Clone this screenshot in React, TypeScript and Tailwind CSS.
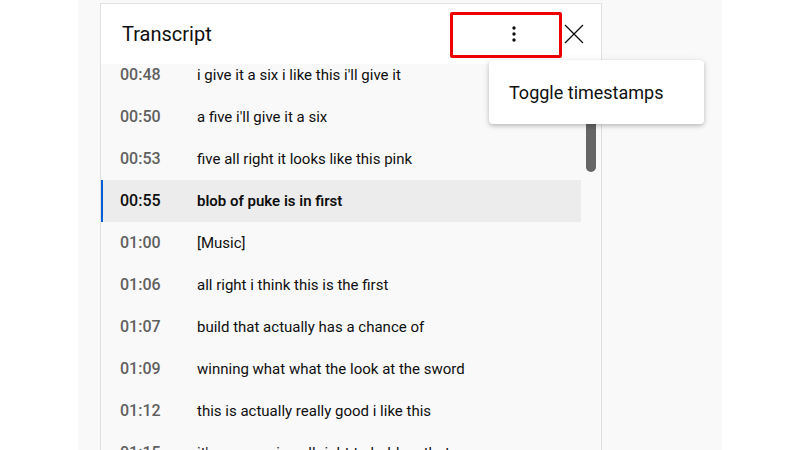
import React from "react";

const rows = [
    { time: "00:48", text: "i give it a six i like this i'll give it" },
    { time: "00:50", text: "a five i'll give it a six" },
    { time: "00:53", text: "five all right it looks like this pink" },
    { time: "00:55", text: "blob of puke is in first", active: true },
    { time: "01:00", text: "[Music]" },
    { time: "01:06", text: "all right i think this is the first" },
    { time: "01:07", text: "build that actually has a chance of" },
    { time: "01:09", text: "winning what what the look at the sword" },
    { time: "01:12", text: "this is actually really good i like this" },
    { time: "01:15", text: "it's an amazing all right to hold on that" },
];

export default function App() {
    return (
        <div className="relative flex h-[450px] w-[800px] overflow-hidden bg-white font-['Roboto',sans-serif]">
            <div className="ml-[78px] h-full w-[644px] bg-[#f9f9f9] pl-[22px] pt-[3px]">
                <div className="flex h-[460px] w-[502px] flex-col border border-[#e0e0e0] bg-[#f9f9f9]">
                    {/* Header */}
                    <div className="relative z-10 flex h-[60px] items-center bg-white pl-[21px] pr-[15px]">
                        <span className="text-[20px] text-[#0f0f0f]">Transcript</span>
                        <div className="flex-1" />
                        <button className="flex h-[24px] w-[24px] items-center justify-center">
                            <svg width="24" height="24" viewBox="0 0 24 24" fill="#0f0f0f">
                                <circle cx="12" cy="6" r="1.7" />
                                <circle cx="12" cy="12" r="1.7" />
                                <circle cx="12" cy="18" r="1.7" />
                            </svg>
                        </button>
                        <button className="ml-[36px] flex h-[24px] w-[24px] items-center justify-center">
                            <svg width="24" height="24" viewBox="0 0 24 24" fill="none" stroke="#0f0f0f" strokeWidth="1.3">
                                <path d="M3 3l18 18M21 3L3 21" />
                            </svg>
                        </button>
                    </div>

                    {/* List */}
                    <div className="relative flex-1 overflow-hidden">
                        <div className="-mt-[10px]">
                            {rows.map((row) => (
                                <div
                                    key={row.time}
                                    className={
                                        row.active
                                            ? "-ml-px flex h-[42px] w-[481px] items-center border-l-[3px] border-[#065fd4] bg-[#ececec] pl-[17px]"
                                            : "flex h-[42px] w-[480px] items-center pl-[19px]"
                                    }
                                >
                                    <span
                                        className={
                                            "w-[77px] text-[16px] font-medium " +
                                            (row.active ? "text-[#0f0f0f]" : "text-[#606060]")
                                        }
                                    >
                                        {row.time}
                                    </span>
                                    <span
                                        className={
                                            "text-[15px] text-[#0f0f0f] " + (row.active ? "font-semibold" : "")
                                        }
                                    >
                                        {row.text}
                                    </span>
                                </div>
                            ))}
                        </div>
                        {/* scrollbar thumb */}
                        <div className="absolute left-[485px] top-[4px] h-[104px] w-[10px] rounded-full bg-[#666]" />
                    </div>
                </div>
            </div>

            {/* Highlight box around the menu button */}
            <div className="absolute left-[450px] top-[12px] z-20 h-[46px] w-[112px] rounded-[2px] border-[3px] border-[#ee0000]" />

            {/* Dropdown menu */}
            <div className="absolute left-[489px] top-[60px] z-20 flex h-[64px] w-[215px] items-center rounded-[4px] bg-white pl-[20px] shadow-[0_2px_4px_rgba(0,0,0,0.2),0_1px_8px_rgba(0,0,0,0.08)]">
                <span className="text-[18px] text-[#0f0f0f]">Toggle timestamps</span>
            </div>
        </div>
    );
}
